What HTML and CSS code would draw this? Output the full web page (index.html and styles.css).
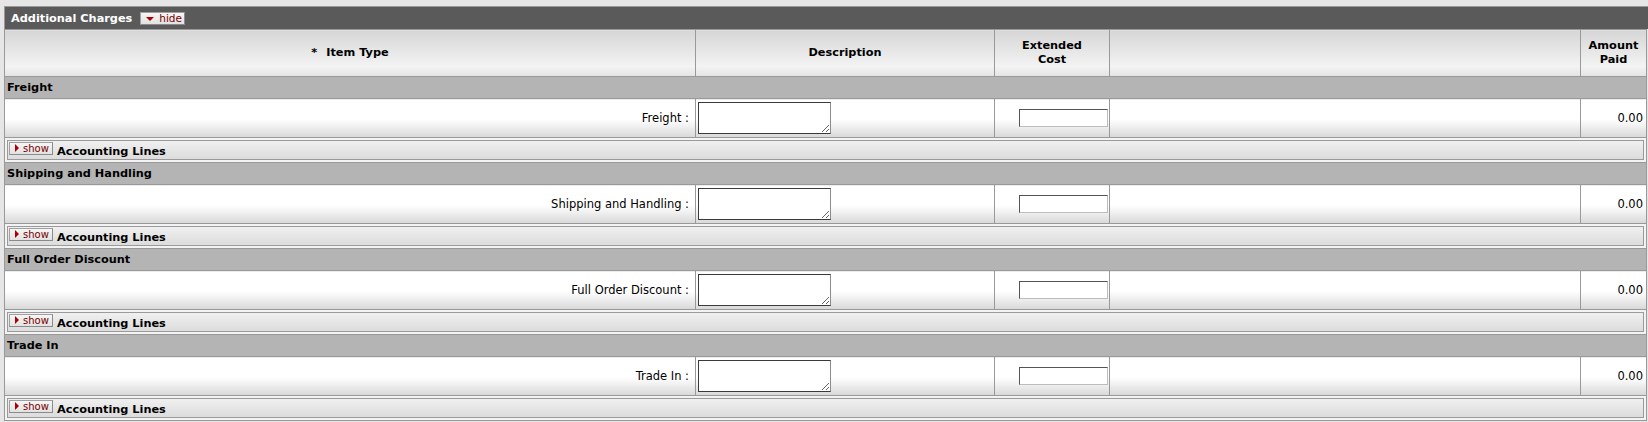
FILE: index.html
```html
<!DOCTYPE html>
<html>
<head>
<meta charset="utf-8">
<link rel="stylesheet" href="styles.css">
</head>
<body>
<div class="page">
  <div class="tab-head">
    <span class="tab-title">Additional Charges</span>
    <span class="tiny-btn"><span class="tri tri-down"></span>hide</span>
  </div>
  <table class="grid">
    <colgroup>
      <col class="w-type"><col class="w-desc"><col class="w-cost"><col class="w-blank"><col class="w-amt">
    </colgroup>
    <thead>
      <tr>
        <th><span class="req">*</span>Item Type</th>
        <th>Description</th>
        <th>Extended<br>Cost</th>
        <th></th>
        <th>Amount<br>Paid</th>
      </tr>
    </thead>
    <tbody>
      <tr class="group"><td colspan="5">Freight</td></tr>
      <tr class="item">
        <td class="label">Freight :</td>
        <td class="desc"><textarea></textarea></td>
        <td class="cost"><input type="text"></td>
        <td></td>
        <td class="amt">0.00</td>
      </tr>
      <tr class="acct"><td colspan="5"><div class="acct-box"><span class="tiny-btn"><span class="tri tri-right"></span>show</span><span class="acct-title">Accounting Lines</span></div></td></tr>

      <tr class="group"><td colspan="5">Shipping and Handling</td></tr>
      <tr class="item">
        <td class="label">Shipping and Handling :</td>
        <td class="desc"><textarea></textarea></td>
        <td class="cost"><input type="text"></td>
        <td></td>
        <td class="amt">0.00</td>
      </tr>
      <tr class="acct"><td colspan="5"><div class="acct-box"><span class="tiny-btn"><span class="tri tri-right"></span>show</span><span class="acct-title">Accounting Lines</span></div></td></tr>

      <tr class="group"><td colspan="5">Full Order Discount</td></tr>
      <tr class="item">
        <td class="label">Full Order Discount :</td>
        <td class="desc"><textarea></textarea></td>
        <td class="cost"><input type="text"></td>
        <td></td>
        <td class="amt">0.00</td>
      </tr>
      <tr class="acct"><td colspan="5"><div class="acct-box"><span class="tiny-btn"><span class="tri tri-right"></span>show</span><span class="acct-title">Accounting Lines</span></div></td></tr>

      <tr class="group"><td colspan="5">Trade In</td></tr>
      <tr class="item">
        <td class="label">Trade In :</td>
        <td class="desc"><textarea></textarea></td>
        <td class="cost"><input type="text"></td>
        <td></td>
        <td class="amt">0.00</td>
      </tr>
      <tr class="acct"><td colspan="5"><div class="acct-box"><span class="tiny-btn"><span class="tri tri-right"></span>show</span><span class="acct-title">Accounting Lines</span></div></td></tr>
    </tbody>
  </table>
</div>
</body>
</html>
```

FILE: styles.css
```css
html, body {
  margin: 0;
  padding: 0;
  background: #e6e6e6;
  font-family: "DejaVu Sans", Verdana, sans-serif;
  font-size: 11.5px;
  color: #000;
}

.page {
  margin: 6px 0 0 4px;
  border-top: 1px solid #9a9a9a;
  border-left: 1px solid #9a9a9a;
}

.tab-head {
  height: 22px;
  background: #5a5a5a;
  display: flex;
  align-items: center;
  padding-left: 6px;
  gap: 8px;
}

.tab-title {
  color: #fff;
  font-weight: bold;
  font-size: 11.3px;
}

.tiny-btn {
  display: inline-flex;
  align-items: center;
  box-sizing: border-box;
  width: 44px;
  height: 13px;
  border: 1px solid #a0a0a0;
  border-right-color: #8a8a8a;
  border-bottom-color: #8a8a8a;
  background: linear-gradient(#f6f6f6, #e2e2e2);
  color: #700;
  font-size: 10px;
  line-height: 11px;
  padding-left: 5px;
  gap: 5px;
}

.tab-head .tiny-btn {
  width: 45px;
  height: 13px;
  margin-top: 1px;
  padding-left: 5px;
  gap: 5px;
  font-size: 10.5px;
}

.tri {
  width: 0;
  height: 0;
  display: inline-block;
}

.tri-down {
  border-left: 4px solid transparent;
  border-right: 4px solid transparent;
  border-top: 4px solid #a00;
}

.tri-right {
  border-top: 4px solid transparent;
  border-bottom: 4px solid transparent;
  border-left: 4px solid #a00;
  margin-right: -1px;
}

.grid {
  border-collapse: collapse;
  table-layout: fixed;
  width: 1642px;
  margin-left: -1px;
}

.w-type { width: 691px; }
.w-desc { width: 299px; }
.w-cost { width: 115px; }
.w-blank { width: 471px; }
.w-amt { width: 66px; }

.grid th, .grid td {
  border: 1px solid #999;
  padding: 0 3px;
}

.grid thead th {
  height: 47px;
  box-sizing: border-box;
  font-weight: bold;
  font-size: 11.3px;
  line-height: 14px;
  text-align: center;
  vertical-align: middle;
  background: linear-gradient(#d6d6d6, #f3f3f3 78%, #e4e4e4);
}

.req {
  margin-right: 9px;
}

.group td {
  height: 22px;
  box-sizing: border-box;
  background: #b4b4b4;
  font-weight: bold;
  font-size: 11.3px;
  padding: 0 2px;
  vertical-align: middle;
}

.item td {
  height: 39px;
  box-sizing: border-box;
  background: linear-gradient(#fff, #fff 52%, #d8d8d8);
  vertical-align: middle;
}

.item td.label {
  text-align: right;
  padding-right: 6px;
}

.item td.desc {
  padding: 0 2px;
}

.item td.cost {
  text-align: right;
  padding: 0 1px 0 2px;
}

.item td.amt {
  text-align: right;
  padding-right: 3px;
}

textarea {
  display: block;
  box-sizing: border-box;
  width: 133px;
  height: 32px;
  margin: 0;
  border: 1px solid #3a3a3a;
  border-right-color: #8c8c8c;
  background: #fff;
  font: inherit;
}

input[type="text"] {
  box-sizing: border-box;
  width: 89px;
  height: 18px;
  margin: 0;
  padding: 0;
  border: 1px solid #bcbcbc;
  border-top-color: #555;
  border-left-color: #555;
  background: #fff;
  vertical-align: middle;
}

.acct td {
  height: 25px;
  box-sizing: border-box;
  padding: 1px 2px 2px 2px;
  background: #f3f3f3;
}

.acct-box {
  box-sizing: border-box;
  height: 20px;
  border: 1px solid #9a9a9a;
  background: linear-gradient(#f0f0f0, #dcdcdc);
  display: flex;
  align-items: center;
  padding-left: 1px;
  gap: 4px;
}

.acct-box .tiny-btn {
  align-self: flex-start;
  margin-top: 1px;
}

.acct-title {
  font-weight: bold;
  font-size: 11.3px;
  margin-top: 3px;
}
```
